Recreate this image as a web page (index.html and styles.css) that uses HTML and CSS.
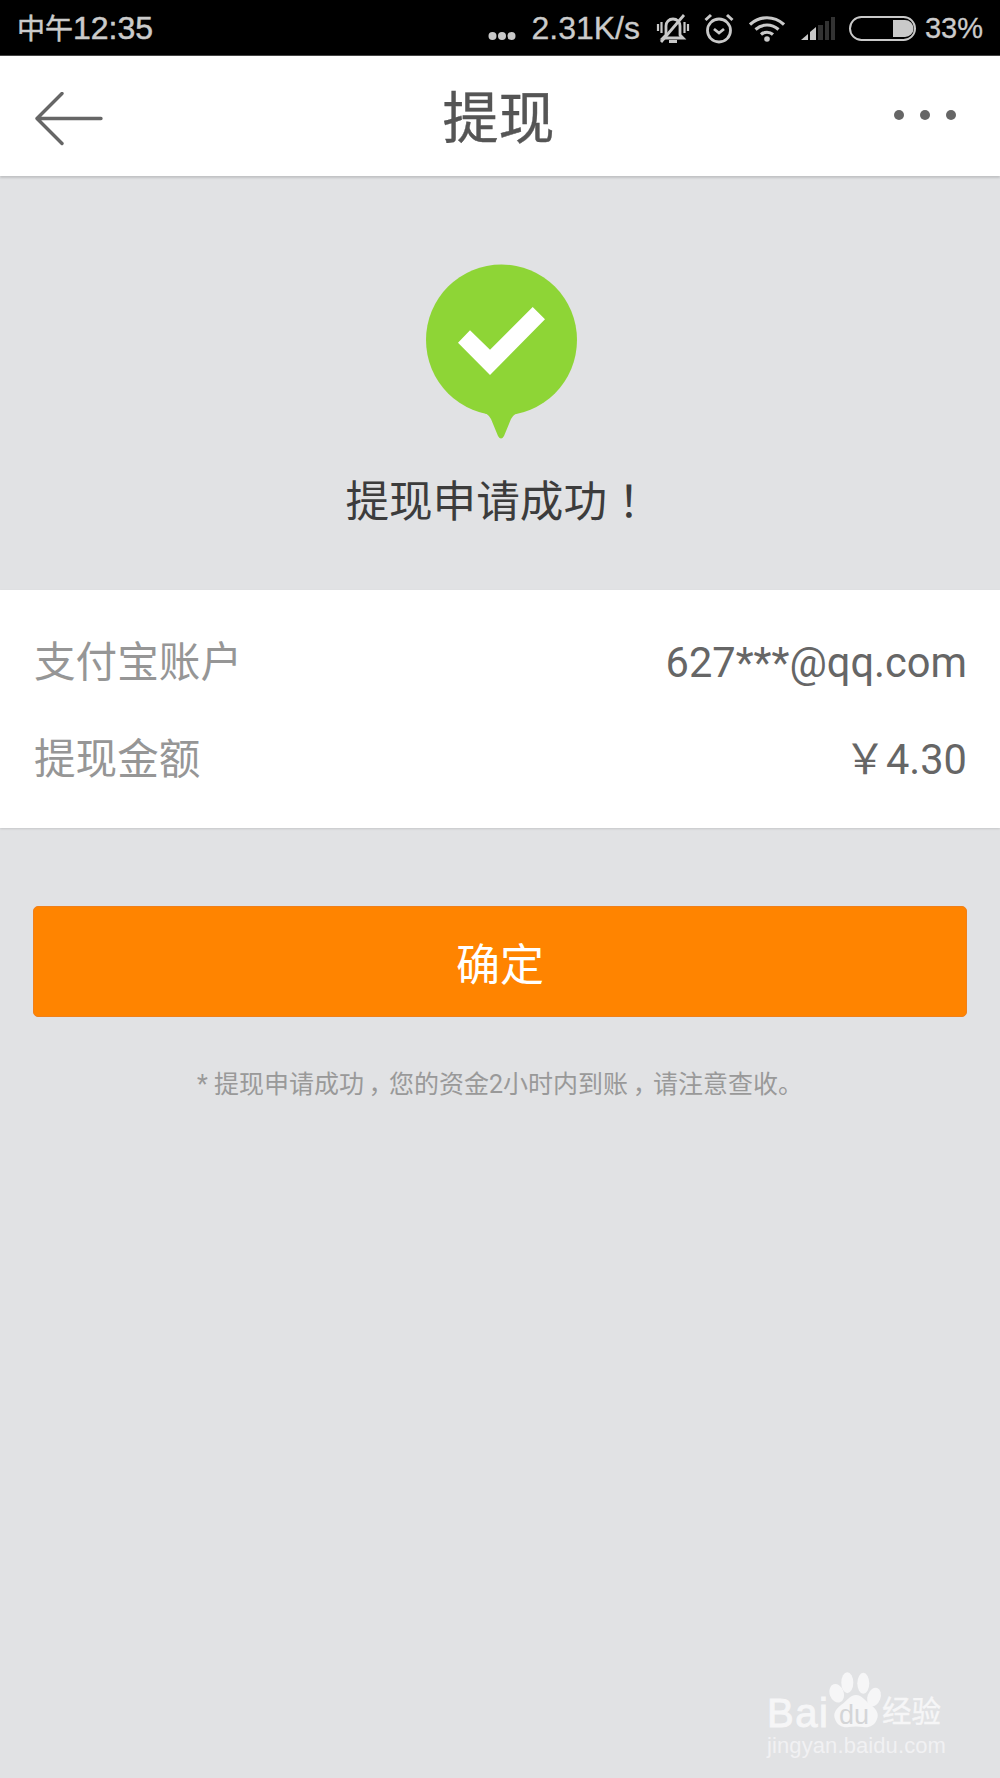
FILE: index.html
```html
<!DOCTYPE html>
<html lang="zh-CN">
<head>
<meta charset="utf-8">
<title>提现</title>
<link rel="stylesheet" href="styles.css">
</head>
<body>
<div class="page">
  <header class="status">
    <div class="clock"><span class="clock-cjk">中午</span>12:35</div>
    <div class="status-right">
      <svg class="ic-dots" width="28" height="10" viewBox="0 0 28 10"><circle cx="4.500" cy="5" r="4"/><circle cx="14" cy="5" r="4"/><circle cx="23.500" cy="5" r="4"/></svg>
      <span class="speed">2.31K/s</span>
      <svg class="ic-bell" width="34" height="32" viewBox="0 0 34 32" fill="none" stroke="#c9c9c9" stroke-width="2.800"><path d="M10 22V13c0-4 3-7 7-7s7 3 7 7v9l3 3H7z"/><path d="M13 28.500h8" stroke-width="3"/><path d="M2 11v7M5.500 9v11M32 11v7M28.500 9v11" stroke-width="2.200"/><path d="M5 29L28 2" stroke-width="2.800"/></svg>
      <svg class="ic-alarm" width="30" height="31" viewBox="0 0 30 31" fill="none" stroke="#c9c9c9" stroke-width="2.800"><circle cx="15" cy="17.500" r="11.500"/><path d="M10 16l5 4 5-4"/><path d="M1.500 7L7 2M28.500 7L23 2" stroke-width="3"/></svg>
      <svg class="ic-wifi" width="36" height="26" viewBox="0 0 36 26" fill="none" stroke="#c9c9c9" stroke-width="3.200"><path d="M1 8.500C11-.5 25-.5 35 8.500"/><path d="M6.500 13.500c7-6 16-6 23 0"/><path d="M12 18.500c3.500-3 8.500-3 12 0"/><circle cx="18" cy="23" r="2.800" fill="#c9c9c9" stroke="none"/></svg>
      <svg class="ic-signal" width="34" height="25" viewBox="0 0 34 25"><path d="M0 24l7-6v6z" fill="#c9c9c9"/><path d="M9 16l6-5v13H9z" fill="#c9c9c9"/><path d="M17 9h5v15h-5zM24 5h4v19h-4zM30 1h4v23h-4z" fill="#333"/></svg>
      <svg class="ic-batt" width="67" height="25" viewBox="0 0 67 25"><rect x="1" y="1" width="65" height="23" rx="11.500" fill="none" stroke="#c9c9c9" stroke-width="2"/><path d="M44 4h12a8.500 8.500 0 0 1 0 17H44z" fill="#c9c9c9"/></svg>
      <span class="pct">33%</span>
    </div>
  </header>

  <nav class="nav">
    <svg class="back" width="68" height="54" viewBox="0 0 68 54" fill="none" stroke="#666" stroke-width="3.400" stroke-linecap="round" stroke-linejoin="round"><path d="M66 26.500H2M27 1.500L2 26.500l25 25"/></svg>
    <h1 class="title">提现</h1>
    <div class="more"><i></i><i></i><i></i></div>
  </nav>

  <section class="success">
    <svg class="bubble" width="156" height="180" viewBox="0 0 156 180">
      <circle cx="78.500" cy="79" r="75.500" fill="#8ed536"/>
      <path fill="#8ed536" d="M58 151Q65 152 68 158L75 175Q78 180 81 175L88 158Q91 152 98 151Z"/>
      <path fill="#fff" d="M35 81.700L47 69.300 67 88.700 109.700 46 122 58.300 67 114Z"/>
    </svg>
    <p class="success-text">提现申请成功<span class="punc">！</span></p>
  </section>

  <section class="card">
    <div class="row"><span class="label">支付宝账户</span><span class="value">627***@qq.com</span></div>
    <div class="row"><span class="label">提现金额</span><span class="value">￥4.30</span></div>
  </section>

  <div class="actions">
    <button class="confirm">确定</button>
    <p class="note">* 提现申请成功<span class="punc">，</span>您的资金2小时内到账<span class="punc">，</span>请注意查收。</p>
  </div>

  <div class="watermark">
    <span class="wm-bai">Bai</span>
    <svg class="wm-paw" width="58" height="60" viewBox="0 0 58 60" fill="#f6f6f7">
      <ellipse cx="9.700" cy="21.300" rx="7" ry="9.500" transform="rotate(-20 9.700 21.300)"/>
      <ellipse cx="20.300" cy="10.700" rx="6" ry="10.500"/>
      <ellipse cx="36.300" cy="11.300" rx="6" ry="10.500"/>
      <ellipse cx="47" cy="25" rx="6.500" ry="9.500" transform="rotate(20 47 25)"/>
      <path d="M29 23c6 0 9 6 15 10 6 5 8 9 6 14-2 7-9 9-14 8-4-.7-10-.7-14 0-5 1-12-1-14-8-2-5 0-9 6-14 6-4 9-10 15-10z"/>
    </svg>
    <span class="wm-du">du</span>
    <span class="wm-jy">经验</span>
    <span class="wm-url">jingyan.baidu.com</span>
  </div>
</div>
</body>
</html>
```

FILE: styles.css
```css
* { box-sizing: border-box; }
html, body { margin: 0; padding: 0; }
body {
  width: 1000px;
  height: 1778px;
  overflow: hidden;
  background: #e1e2e4;
  font-family: "Roboto", "Noto Sans CJK SC", sans-serif;
}
.page { position: relative; width: 1000px; height: 1778px; background: #e1e2e4; }
.punc {
  display: inline-block;
  width: 1em;
  text-align: center;
  font-feature-settings: "palt";
}

.status {
  height: 56px;
  background: #000;
  color: #cbcbcb;
  display: flex;
  align-items: center;
  justify-content: space-between;
  padding: 2px 17px 0 17px;
  font-family: "Liberation Sans", "Noto Sans CJK SC", sans-serif;
  border-bottom: 1px solid #444;
}
.clock { font-size: 32px; line-height: 50px; -webkit-text-stroke: .5px #cbcbcb; }
.clock-cjk { font-size: 28px; }
.status-right { display: flex; align-items: center; }
.speed { font-size: 32px; margin-left: 15px; margin-right: 16px; -webkit-text-stroke: .3px #cbcbcb; }
.pct { font-size: 29px; margin-left: 9px; -webkit-text-stroke: .3px #cbcbcb; }
.ic-dots { fill: #c9c9c9; margin-top: 15px; }
.ic-alarm { margin-left: 14px; }
.ic-wifi { margin-left: 15px; }
.ic-signal { margin-left: 16px; }
.ic-batt { margin-left: 14px; }

.nav {
  height: 120px;
  background: #fff;
  display: flex;
  align-items: center;
  justify-content: space-between;
  padding: 6px 44px 0 35px;
  box-shadow: 0 2px 2px rgba(0,0,0,.14);
  position: relative;
}
.title {
  margin: 0;
  font-size: 56px;
  font-weight: 400;
  color: #555;
  line-height: 1;
  -webkit-text-stroke: .4px #555;
}
.back { flex: none; }
.more { display: flex; gap: 16px; width: 62px; margin-top: -9px; }
.more i { width: 10px; height: 10px; border-radius: 50%; background: #666; }

.success {
  height: 414px;
  padding-top: 85px;
  display: flex;
  flex-direction: column;
  align-items: center;
}
.bubble { display: block; margin-left: 2px; }
.success-text {
  margin: 32px 0 0 -4px;
  font-size: 43.600px;
  line-height: 60px;
  color: #3c3c3c;
}

.card {
  height: 238px;
  background: #fff;
  padding: 24px 33px 0 34px;
  box-shadow: 0 1px 2px rgba(0,0,0,.12);
}
.row {
  height: 97px;
  display: flex;
  align-items: center;
  justify-content: space-between;
}
.label { font-size: 41.600px; line-height: 50px; color: #969696; }
.value { font-size: 41.600px; line-height: 50px; color: #666; }

.actions { padding: 78px 33px 0; }
.confirm {
  display: block;
  width: 100%;
  height: 111px;
  border: 1px solid #f0801a;
  border-radius: 5px;
  background: #ff8400;
  color: #fff;
  font: 44px "Noto Sans CJK SC", sans-serif;
  padding: 0;
}
.note {
  margin: 50px 0 0;
  text-align: center;
  font-size: 25px;
  line-height: 36px;
  color: #999;
}

.watermark {
  position: absolute;
  left: 765px;
  top: 1670px;
  width: 190px;
  height: 95px;
  color: #f6f6f7;
}
.watermark span { position: absolute; white-space: nowrap; line-height: 1; }
.wm-paw { position: absolute; left: 62px; top: 2px; }
.wm-bai { left: 2px; top: 23px; font: 400 40px "Liberation Sans", sans-serif; letter-spacing: 1.500px; -webkit-text-stroke: 1px #f6f6f7; }
.wm-du { left: 74px; top: 32px; font: 400 27px "Liberation Sans", sans-serif; color: #d4d5d7; }
.wm-jy { left: 117px; top: 25px; font: 400 29.500px "Noto Sans CJK SC", sans-serif; -webkit-text-stroke: .4px #f6f6f7; }
.wm-url { left: 2px; top: 65px; font: 400 22px "Liberation Sans", sans-serif; letter-spacing: .1px; color: #f1f1f3; }
```
